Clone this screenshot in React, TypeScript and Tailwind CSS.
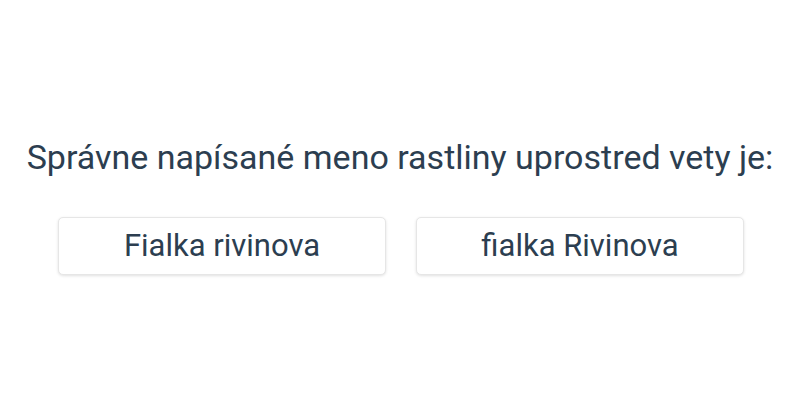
import React from "react";

export default function App() {
  return (
    <div
      className="w-[800px] h-[400px] bg-white flex flex-col items-center text-[#2c3e50]"
      style={{ fontFamily: "Roboto, 'Noto Sans', sans-serif" }}
    >
      <div className="mt-[134px] text-[34px] leading-[46px] whitespace-nowrap">
        Správne napísané meno rastliny uprostred vety je:
      </div>
      <div className="mt-[37px] ml-[2px] flex gap-[30px]">
        <button className="w-[328px] h-[58px] bg-white rounded-[5px] border border-[#e6e6e6] shadow-[0_1px_3px_rgba(0,0,0,0.12)] text-[31px] text-[#2c3e50]">
          Fialka rivinova
        </button>
        <button className="w-[328px] h-[58px] bg-white rounded-[5px] border border-[#e6e6e6] shadow-[0_1px_3px_rgba(0,0,0,0.12)] text-[31px] text-[#2c3e50]">
          fialka Rivinova
        </button>
      </div>
    </div>
  );
}
